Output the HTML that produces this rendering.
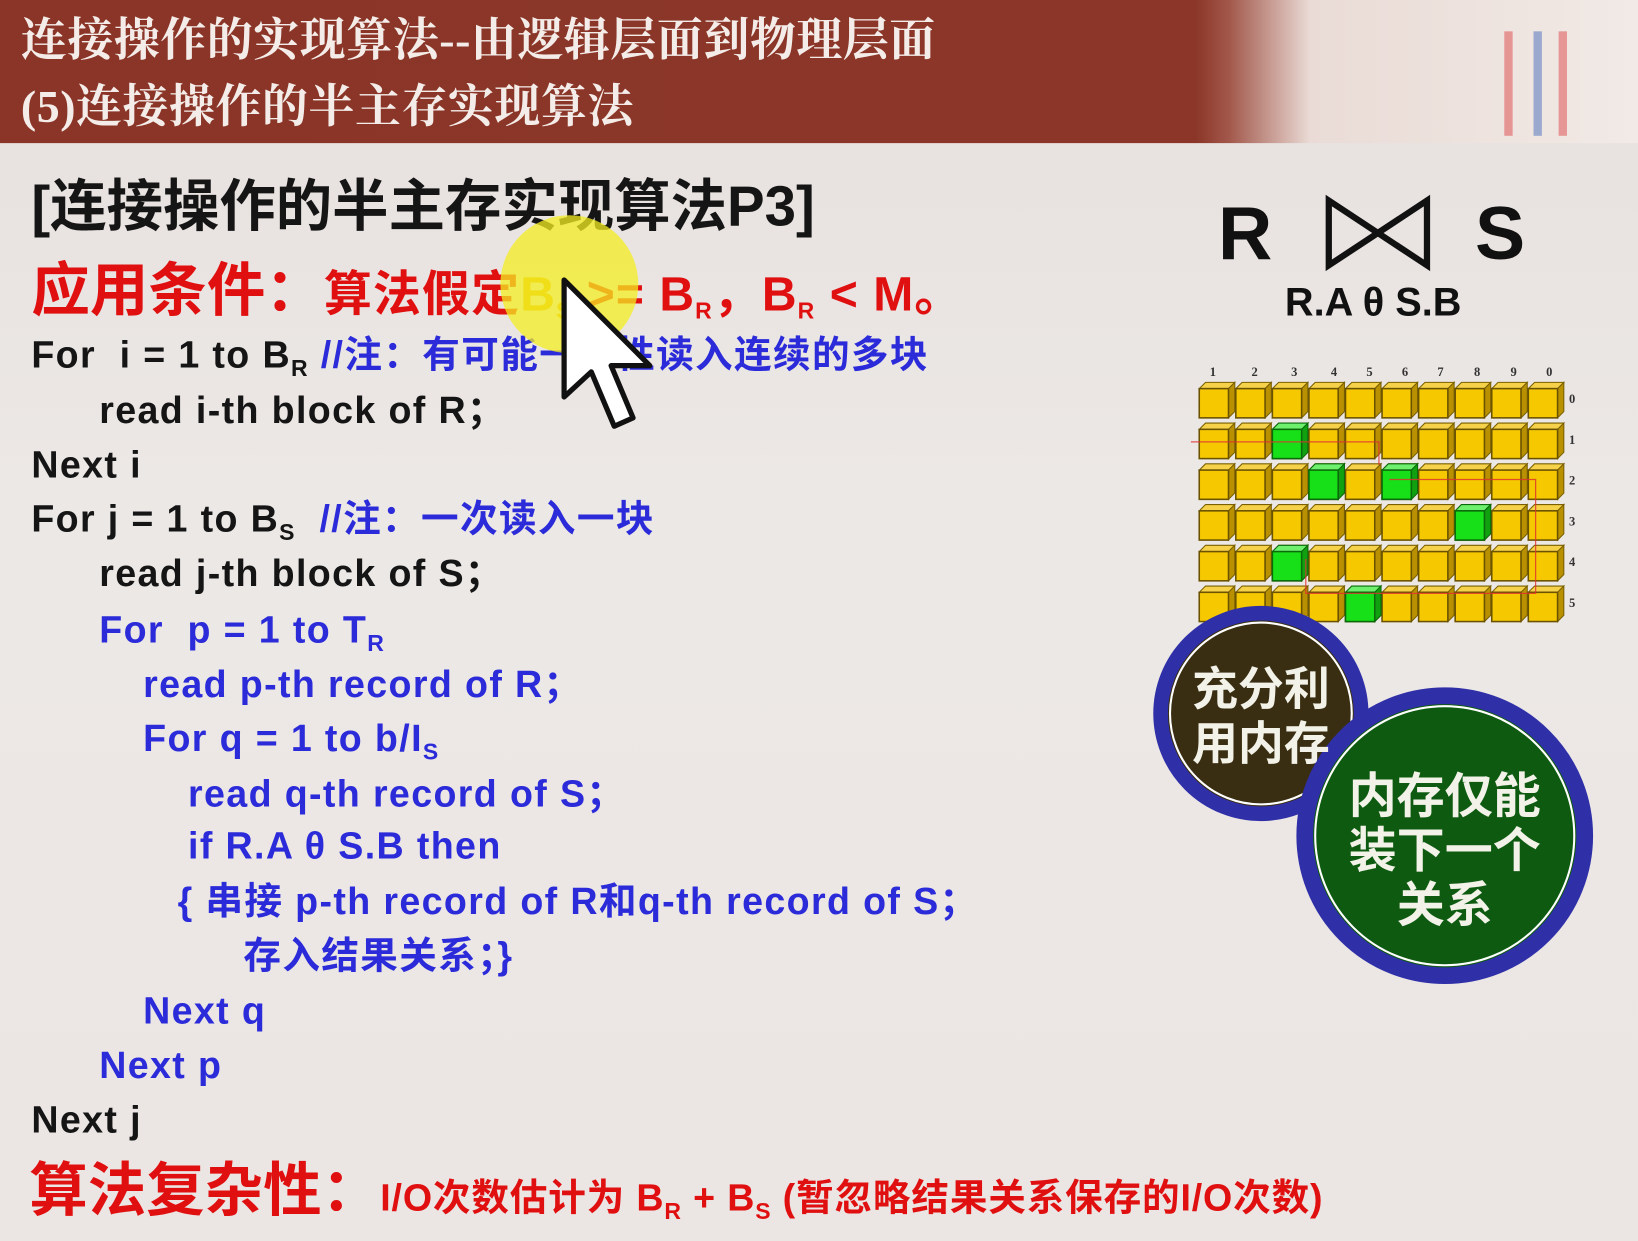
<!DOCTYPE html>
<html><head><meta charset="utf-8"><style>
html,body{margin:0;padding:0;width:1638px;height:1241px;overflow:hidden;background:#ebe6e3}
#s{position:absolute;left:0;top:0;width:1568px;height:1188px;transform:scale(1.04464);transform-origin:0 0;
font-family:"Liberation Sans","Noto Sans CJK SC",sans-serif;font-weight:bold;
background:linear-gradient(180deg,#e6e0de 0%,#ece8e6 40%,#ebe6e4 100%)}
.hd{position:absolute;left:0;top:0;width:1568px;height:137px;background:linear-gradient(90deg,#8a3527 0%,#8b3628 73%,#a2574a 75%,#eadbd6 80%,#f1eae6 100%)}
.ht{position:absolute;color:#f4ece8;font-size:44px;font-family:"Liberation Serif","Noto Serif CJK SC",serif;font-weight:bold;white-space:nowrap;letter-spacing:0.5px}
.t{position:absolute;white-space:nowrap;font-size:36px;line-height:40px;color:#151515;letter-spacing:1.3px}
.b{color:#2b2bd9}.r{color:#e01010}
sub{font-size:22px;vertical-align:-8px;line-height:0}
</style></head><body><div id="s">
<div class="hd"></div>
<div class="ht" style="left:20px;top:2px">连接操作的实现算法--由逻辑层面到物理层面</div>
<div class="ht" style="left:20px;top:66px">(5)连接操作的半主存实现算法</div>
<div style="position:absolute;left:1440px;top:30px;width:8px;height:100px;background:#e06060;opacity:.6"></div>
<div style="position:absolute;left:1468px;top:30px;width:8px;height:100px;background:#6080c0;opacity:.6"></div>
<div style="position:absolute;left:1492px;top:30px;width:8px;height:100px;background:#e06060;opacity:.6"></div>

<div class="t" style="left:30px;top:168px;font-size:54px;line-height:60px;letter-spacing:0">[连接操作的半主存实现算法P3]</div>
<div class="t r" style="left:30px;top:248px;font-size:46px;line-height:60px;letter-spacing:1px"><span style="font-size:56px;letter-spacing:0">应用条件：</span>算法假定<span style="color:#e8b000">B<sub>S</sub></span> &gt;= B<sub>R</sub>，B<sub>R</sub> &lt; M。</div>
<div class="t" style="left:30px;top:320px">For &nbsp;i = 1 to B<sub>R</sub> <span class="b">//注：有可能一次性读入连续的多块</span></div>
<div class="t" style="left:95px;top:373px">read i-th block of R；</div>
<div class="t" style="left:30px;top:425px">Next i</div>
<div class="t" style="left:30px;top:477px">For j = 1 to B<sub>S</sub> &nbsp;<span class="b">//注：一次读入一块</span></div>
<div class="t" style="left:95px;top:529px">read j-th block of S；</div>
<div class="t b" style="left:95px;top:583px">For &nbsp;p = 1 to T<sub>R</sub></div>
<div class="t b" style="left:137px;top:635px">read p-th record of R；</div>
<div class="t b" style="left:137px;top:687px">For q = 1 to b/I<sub>S</sub></div>
<div class="t b" style="left:180px;top:740px">read q-th record of S；</div>
<div class="t b" style="left:180px;top:790px">if R.A θ S.B then</div>
<div class="t b" style="left:170px;top:843px">{ 串接 p-th record of R和q-th record of S；</div>
<div class="t b" style="left:233px;top:895px">存入结果关系；}</div>
<div class="t b" style="left:137px;top:948px">Next q</div>
<div class="t b" style="left:95px;top:1000px">Next p</div>
<div class="t" style="left:30px;top:1052px">Next j</div>
<div class="t r" style="left:28px;top:1110px;font-size:36px;line-height:60px;letter-spacing:0.8px"><span style="font-size:56px;letter-spacing:0">算法复杂性：</span>I/O次数估计为 B<sub>R</sub> + B<sub>S</sub> (暂忽略结果关系保存的I/O次数)</div>

<svg style="position:absolute;left:0;top:0" width="1568" height="1188">
<circle cx="545" cy="272" r="66" fill="#f3ee20" opacity=".75"/>
<path d="M540 268 L540 380 L566 356 L588 408 L606 400 L585 350 L622 350 Z" fill="#fff" stroke="#111" stroke-width="5" stroke-linejoin="round"/>
<text x="1166" y="248" font-family="Liberation Sans" font-weight="bold" font-size="72" fill="#111">R</text>
<text x="1412" y="248" font-family="Liberation Sans" font-weight="bold" font-size="72" fill="#111">S</text>
<path d="M1272 192 L1272 254 L1366 192 L1366 254 Z" fill="none" stroke="#111" stroke-width="6"/>
<text x="1230" y="302" font-family="Liberation Sans" font-weight="bold" font-size="38" fill="#111">R.A θ S.B</text>
<defs>
<g id="y"><path d="M0 6 L6 0 L34 0 L28 6 Z" fill="#f6d24a" stroke="#7a6000" stroke-width="1"/><path d="M28 6 L34 0 L34 28 L28 34 Z" fill="#b89000" stroke="#7a6000" stroke-width="1"/><rect x="0" y="6" width="28" height="28" fill="#f5c800" stroke="#6a5200" stroke-width="1.5"/></g>
<g id="g"><path d="M0 6 L6 0 L34 0 L28 6 Z" fill="#6ef06e" stroke="#0a6a0a"/><path d="M28 6 L34 0 L34 28 L28 34 Z" fill="#10a010" stroke="#0a6a0a"/><rect x="0" y="6" width="28" height="28" fill="#18e018" stroke="#0a6a0a" stroke-width="1.5"/></g>
</defs>
<g font-family="Liberation Serif" font-size="12" fill="#333">
<text x="1158" y="360">1</text><text x="1198" y="360">2</text><text x="1236" y="360">3</text><text x="1274" y="360">4</text><text x="1308" y="360">5</text><text x="1342" y="360">6</text><text x="1376" y="360">7</text><text x="1411" y="360">8</text><text x="1446" y="360">9</text><text x="1480" y="360">0</text>
<text x="1502" y="386">0</text><text x="1502" y="425">1</text><text x="1502" y="464">2</text><text x="1502" y="503">3</text><text x="1502" y="542">4</text><text x="1502" y="581">5</text>
</g>
<g id="row">
<use href="#y" x="1148" y="366"/><use href="#y" x="1183" y="366"/><use href="#y" x="1218" y="366"/><use href="#y" x="1253" y="366"/><use href="#y" x="1288" y="366"/><use href="#y" x="1323" y="366"/><use href="#y" x="1358" y="366"/><use href="#y" x="1393" y="366"/><use href="#y" x="1428" y="366"/><use href="#y" x="1463" y="366"/>
</g>
<use href="#row" y="39"/><use href="#row" y="78"/><use href="#row" y="117"/><use href="#row" y="156"/><use href="#row" y="195"/>
<use href="#g" x="1218" y="405"/><use href="#g" x="1253" y="444"/><use href="#g" x="1323" y="444"/><use href="#g" x="1393" y="483"/><use href="#g" x="1218" y="522"/><use href="#g" x="1288" y="561"/>
<path d="M1140 423 L1320 423 L1320 445 M1330 459 L1470 459 L1470 568 L1290 568 M1290 568 L1250 568 L1250 535" fill="none" stroke="#e03030" stroke-width="1.2" opacity=".8"/>
<circle cx="1207" cy="683" r="96" fill="#3a2e12" stroke="#2f2fa8" stroke-width="14"/>
<circle cx="1207" cy="683" r="87" fill="none" stroke="#fff" stroke-width="2"/>
<circle cx="1383" cy="800" r="134" fill="#0e5a10" stroke="#2f2fa8" stroke-width="16"/>
<circle cx="1383" cy="800" r="124" fill="none" stroke="#fff" stroke-width="2"/>
<g font-family="Noto Sans CJK SC" font-weight="bold" fill="#f2f2e8" text-anchor="middle">
<text x="1207" y="675" font-size="44">充分利</text><text x="1207" y="727" font-size="44">用内存</text>
<text x="1383" y="778" font-size="46">内存仅能</text><text x="1383" y="830" font-size="46">装下一个</text><text x="1383" y="882" font-size="46">关系</text>
</g>
</svg>
</div></body></html>
